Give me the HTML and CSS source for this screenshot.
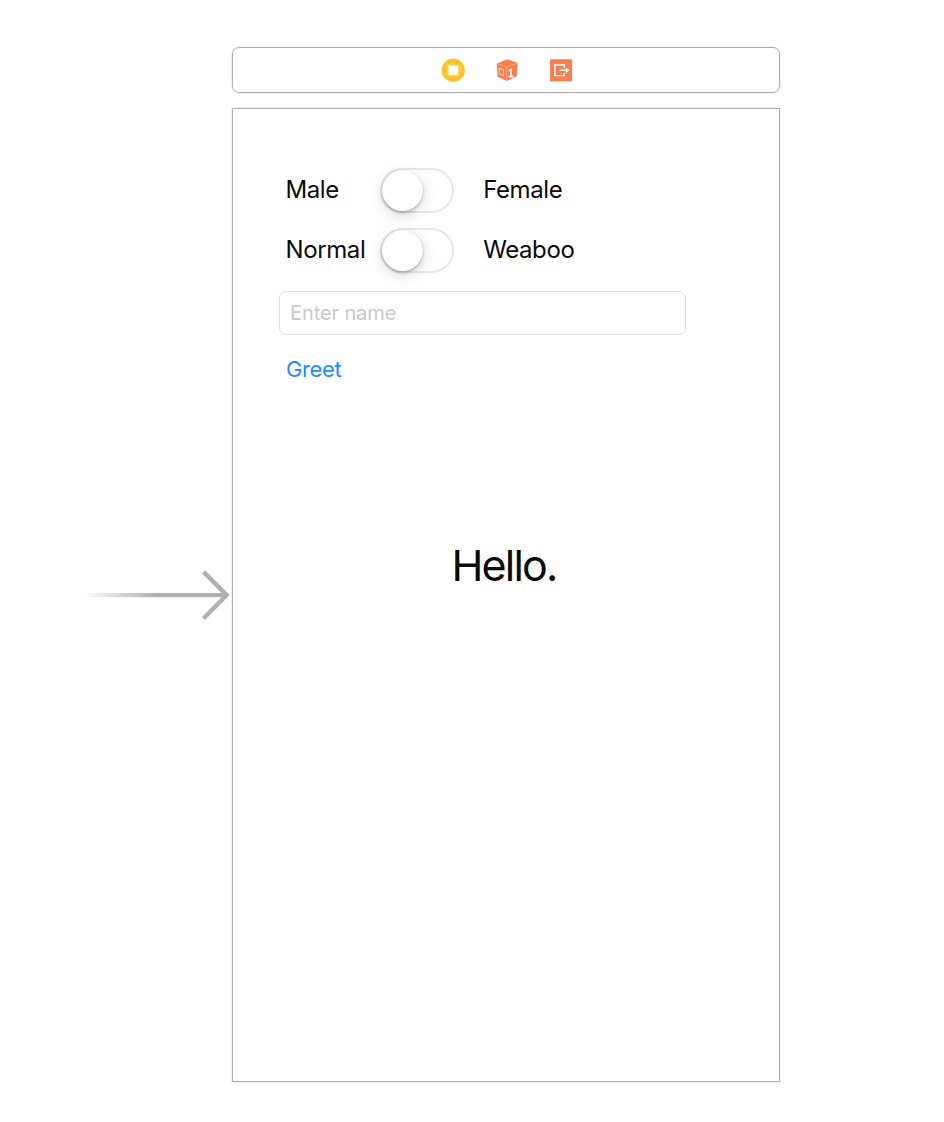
FILE: index.html
```html
<!DOCTYPE html>
<html lang="en">
<head>
<meta charset="utf-8">
<title>Storyboard</title>
<link rel="stylesheet" href="styles.css">
</head>
<body>
<main class="canvas">
  <svg class="entry-arrow" width="146" height="52" viewBox="0 0 146 52" aria-hidden="true">
    <defs>
      <linearGradient id="fade" x1="0" x2="1" y1="0" y2="0">
        <stop offset="0" stop-color="#b0b0b0" stop-opacity="0.05"/>
        <stop offset=".5" stop-color="#b0b0b0"/>
      </linearGradient>
    </defs>
    <rect x="1" y="24" width="139" height="4.2" fill="url(#fade)"/>
    <path d="M117.5 2.7 140.7 26.1 117.5 49.5" fill="none" stroke="#b0b0b0" stroke-width="4.4"/>
  </svg>
  <section class="scene">
    <header class="dock">
      <svg width="24" height="24" viewBox="0 0 24 24">
        <circle cx="12.2" cy="12.2" r="11.7" fill="#fdc82f"/>
        <circle cx="12.2" cy="12.2" r="9.8" fill="none" stroke="#f5be2d" stroke-width="1"/>
        <rect x="7.2" y="7.2" width="10" height="10" fill="#fff" stroke="#fbdc85" stroke-width="1"/>
      </svg>
      <svg width="24" height="24" viewBox="0 0 24 24">
        <path d="M12.3 1.2 22.6 5 22 18 11.8 23 2.5 18.6 1.8 5.4Z" fill="#fc7d50"/>
        <path d="M2 5.6 11.5 9 22.4 5.1M11.5 9 11.9 22.8" fill="none" stroke="#ffb295" stroke-width=".8"/>
        <path d="M4.3 10.2 8.4 11.7V17.7L4.5 16Z" fill="none" stroke="#ffd3c2" stroke-width="1.1"/>
        <path d="M13.8 12.9 16 11.4V18.4M13.8 18.6H18.4" fill="none" stroke="#fff" stroke-width="1.6"/>
      </svg>
      <svg width="24" height="24" viewBox="0 0 24 24">
        <rect x="1.1" y="1.3" width="22" height="22" fill="#fc7d50"/>
        <path d="M15.3 9.6V7H5.8V17.6H15.3V15M10.6 12.3H18.1" fill="none" stroke="#fff" stroke-width="1.4"/>
        <path d="M16.8 9.4 20.3 12.3 16.8 15.2Z" fill="#fff"/>
      </svg>
    </header>
    <div class="device">
      <div class="row">
        <span class="label">Male</span>
        <span class="switch"><span class="knob"></span></span>
        <span class="label trailing">Female</span>
      </div>
      <div class="row">
        <span class="label">Normal</span>
        <span class="switch"><span class="knob"></span></span>
        <span class="label trailing">Weaboo</span>
      </div>
      <div class="field">Enter name</div>
      <div class="greet">Greet</div>
      <div class="hello">Hello.</div>
    </div>
  </section>
</main>
</body>
</html>
```
FILE: styles.css
```css
* { box-sizing: border-box; }
body { margin: 0; background: #fff; font-family: Inter, "Liberation Sans", sans-serif; color: #0a0a0a; }
.canvas { display: flex; height: 1122px; padding: 47px 0 0 86px; overflow: hidden; }
.entry-arrow { flex: none; margin-top: 522px; }
.scene { flex: none; width: 548px; }
.dock { display: flex; justify-content: center; align-items: center; gap: 30px; height: 46px; padding-left: 2px; border: 1px solid #b0b0b0; border-radius: 7px; box-shadow: 0 0 0 .5px #e2e2e2; }
.device { height: 974px; margin-top: 15px; padding: 51px 0 0 46px; border: 1px solid #b0b0b0; box-shadow: 0 0 0 .5px #e2e2e2; }
.row { display: grid; grid-template-columns: 94.5px 74px 150px; align-items: center; height: 60px; padding-left: 6.5px; }
.label { font-size: 24px; line-height: 30px; letter-spacing: -.4px; white-space: nowrap; }
.switch { width: 74px; height: 45px; border: 2px solid #e8e8e8; border-radius: 23px; }
.knob { display: block; width: 41px; height: 41px; border-radius: 50%; background: #fff; box-shadow: 0 4px 14px rgba(0,0,0,.16), 0 2px 3px rgba(0,0,0,.18), 0 0 1px rgba(0,0,0,.18); }
.trailing { padding-left: 29.2px; }
.field { width: 407px; height: 44px; margin-top: 11px; padding-left: 10px; border: 1px solid #dedede; border-radius: 7px; font-size: 20px; line-height: 42px; letter-spacing: -.1px; color: #c9c9ce; }
.greet { margin: 19px 0 0 7px; font-size: 22px; line-height: 30px; letter-spacing: -.4px; color: #268aff; }
.hello { margin: 151px 50px 0 0; text-align: center; font-size: 43px; line-height: 60px; letter-spacing: -1.8px; }
```
